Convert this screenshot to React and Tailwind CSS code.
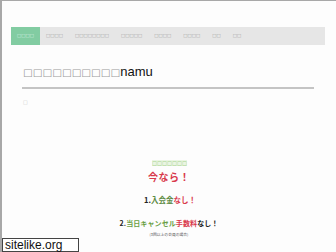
import React from 'react';

const navItems = ['□□□□', '□□□□□□□□', '□□□□□', '□□□□', '□□□□', '□□', '□□'];

export default function App() {
  return (
    <div className="relative w-[336px] h-[252px] overflow-hidden bg-[#fdfdfd] border-t border-l-2 border-[#a8a8a8] font-['Liberation_Sans','Noto_Sans_CJK_JP',sans-serif]">
      {/* nav */}
      <nav className="mt-[26px] ml-[9px] w-[314px] h-[18px] bg-[#e6e6e6] flex items-center">
        <div className="w-[29px] h-full bg-[#82cca2] flex items-center justify-center">
          <span className="text-[4.5px] leading-none text-[#d8f0e2] font-['DejaVu_Sans'] whitespace-nowrap">
            □□□□
          </span>
        </div>
        <div className="flex items-center gap-[12px] ml-[6px]">
          {navItems.map((label, i) => (
            <span
              key={i}
              className="whitespace-nowrap text-[4.5px] leading-none text-[#9c9c9c] font-['DejaVu_Sans']"
            >
              {label}
            </span>
          ))}
        </div>
      </nav>

      {/* title */}
      <h1 className="mt-[20px] pl-[21px] text-[13px] leading-[14px] flex items-center">
        <span className="text-[#9a9a9a] text-[10.3px] font-['DejaVu_Sans']">□□□□□□□□□□</span>
        <span className="text-[#111]">namu</span>
      </h1>
      <div className="mt-[8px] ml-[20px] w-[292px] h-[2px] bg-[#c4c4c4]" />
      <div className="mt-[10px] ml-[21px] text-[5px] leading-[6px] text-[#c8c8c8] font-['DejaVu_Sans']">□</div>

      {/* campaign */}
      <div className="mt-[55px] flex flex-col items-center font-bold font-['Noto_Sans_CJK_JP',sans-serif]">
        <div className="ml-[1px] text-[5.3px] leading-[6px] text-[#a9d48e] font-normal font-['DejaVu_Sans'] bg-[#eaf5e3]">
          □□□□□□□
        </div>
        <div className="mt-[5px] text-[10px] leading-[12px] tracking-[0.5px] text-[#d93a4c]">今なら！</div>
        <div className="mt-[12px] ml-[2px] text-[7.5px] leading-[9px] text-[#222]">
          1.<span className="text-[#5d8c45]">入会金</span>
          <span className="text-[#d93a4c]">なし！</span>
        </div>
        <div className="mt-[15px] text-[7px] leading-[9px] tracking-[0.1px] text-[#222]">
          2.<span className="text-[#6aa044]">当日キャンセル</span>
          <span className="text-[#d93a4c]">手数料</span>
          なし！
        </div>
        <div className="mt-[4px] text-[3.8px] leading-[5px] font-normal text-[#555]">(3回以上の会員の場合)</div>
      </div>

      {/* watermark */}
      <div className="absolute left-0 bottom-0 w-[77px] h-[14px] bg-white border border-[#444] flex items-center pl-[2px] text-[12px] leading-none text-[#111] font-['Liberation_Sans'] font-normal">
        sitelike.org
      </div>
    </div>
  );
}
